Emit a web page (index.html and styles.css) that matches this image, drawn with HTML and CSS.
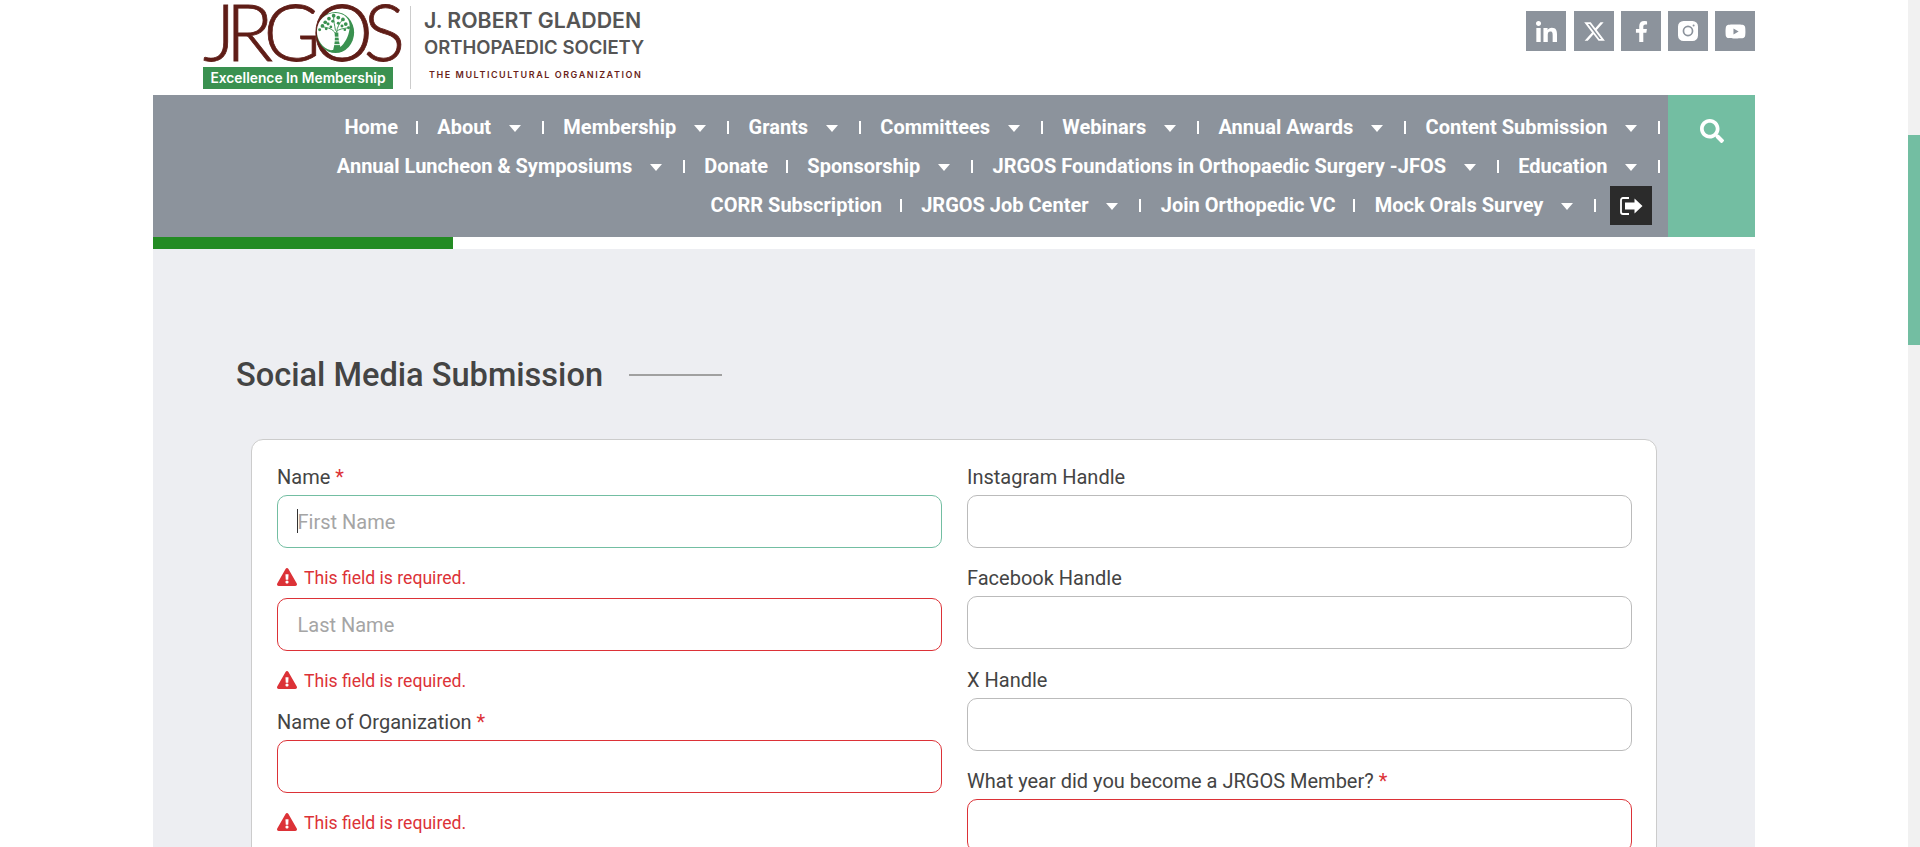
FILE: index.html
```html
<!DOCTYPE html>
<html lang="en">
<head>
<meta charset="utf-8">
<title>Social Media Submission</title>
<link rel="stylesheet" href="styles.css">
</head>
<body>
<div class="page">
  <header class="top">
    <div class="brand">
      <div class="mark">
        <div class="mark-word">
          <span class="mark-text">JRGOS</span>
          <svg class="mark-tree" viewBox="0 0 44 48" aria-hidden="true">
            <ellipse cx="22" cy="24" rx="20" ry="22" fill="#3a9150"/>
            <path d="M2 22C3 10 11 3 22 3 30 3 34 7 36 11 39 18 36 28 32 34 28 41 22 43 17 43 8 41 2 32 2 22Z" fill="#fff"/>
            <path d="M19 45C21 37 22 31 21 24L25 24C25 31 26 37 29 44Z" fill="#3a9150"/>
            <path d="M20 29H26M20 33H26M20 37H27" stroke="#fff" stroke-width="1"/>
            <path d="M22 25C19 20 14 19 9 18M23 24C24 18 26 14 30 10M23 23C26 20 30 20 35 19M22 22C21 16 20 12 20 7" stroke="#3a9150" stroke-width="1" fill="none"/>
            <g fill="#3a9150">
              <circle cx="8" cy="17" r="2"/><circle cx="5" cy="21" r="1.6"/><circle cx="11" cy="13" r="2"/><circle cx="15" cy="9" r="2"/>
              <circle cx="20" cy="6" r="2"/><circle cx="25" cy="8" r="2"/><circle cx="30" cy="10" r="2"/><circle cx="33" cy="15" r="2"/>
              <circle cx="36" cy="19" r="1.6"/><circle cx="14" cy="15" r="1.6"/><circle cx="19" cy="12" r="1.6"/><circle cx="25" cy="14" r="1.6"/>
              <circle cx="29" cy="17" r="1.6"/><circle cx="12" cy="20" r="1.5"/><circle cx="17" cy="18" r="1.5"/><circle cx="32" cy="21" r="1.4"/>
            </g>
          </svg>
        </div>
        <div class="mark-badge">Excellence In Membership</div>
      </div>
      <div class="brand-text">
        <div class="brand-l1">J. ROBERT GLADDEN</div>
        <div class="brand-l2">ORTHOPAEDIC SOCIETY</div>
        <div class="brand-l3">THE MULTICULTURAL ORGANIZATION</div>
      </div>
    </div>
    <div class="social">
      <a class="soc" href="#"><svg class="ic-li" viewBox="0 0 448 448"><path d="M100.28 448H7.4V148.9h92.88zM53.79 108.1C24.09 108.1 0 83.5 0 53.8a53.79 53.79 0 0 1 107.58 0c0 29.7-24.1 54.3-53.79 54.3zM447.9 448h-92.68V302.4c0-34.7-.7-79.2-48.29-79.2-48.29 0-55.69 37.7-55.69 76.7V448h-92.78V148.9h89.08v40.8h1.3c12.4-23.5 42.69-48.3 87.88-48.3 94 0 111.28 61.9 111.28 142.3V448z"/></svg></a>
      <a class="soc" href="#"><svg class="ic-x" viewBox="0 0 24 24"><path d="M18.244 2.25h3.308l-7.227 8.26 8.502 11.24H16.17l-5.214-6.817L4.99 21.75H1.68l7.73-8.835L1.254 2.25H8.08l4.713 6.231zm-1.161 17.52h1.833L7.084 4.126H5.117z"/></svg></a>
      <a class="soc" href="#"><svg class="ic-fb" viewBox="0 0 320 512"><path d="M279.14 288l14.22-92.66h-88.91v-60.13c0-25.35 12.42-50.06 52.24-50.06h40.42V6.26S260.43 0 225.36 0c-73.22 0-121.08 44.38-121.08 124.72v70.62H22.89V288h81.39v224h100.17V288z"/></svg></a>
      <a class="soc" href="#"><svg class="ic-ig" viewBox="0 0 20 20"><path fill-rule="evenodd" d="M5.5 0h9A5.5 5.5 0 0 1 20 5.5v9a5.500 5.500 0 0 1-5.500 5.500h-9A5.500 5.500 0 0 1 0 14.500v-9A5.500 5.500 0 0 1 5.500 0zM10 4.600a5.400 5.400 0 1 0 0 10.800 5.400 5.400 0 0 0 0-10.800zM10 6.300a3.700 3.700 0 1 1 0 7.400 3.700 3.700 0 0 1 0-7.400z"/><circle cx="15.600" cy="4.400" r="1" fill="#8c939c"/></svg></a>
      <a class="soc" href="#"><svg class="ic-yt" viewBox="0 0 576 512"><path d="M549.655 124.083c-6.281-23.65-24.787-42.276-48.284-48.597C458.781 64 288 64 288 64S117.22 64 74.629 75.486c-23.497 6.322-42.003 24.947-48.284 48.597-11.412 42.867-11.412 132.305-11.412 132.305s0 89.438 11.412 132.305c6.281 23.65 24.787 41.5 48.284 47.821C117.22 448 288 448 288 448s170.78 0 213.371-11.486c23.497-6.321 42.003-24.171 48.284-47.821 11.412-42.867 11.412-132.305 11.412-132.305s0-89.438-11.412-132.305zm-317.51 213.508V175.185l142.739 81.205-142.739 81.201z"/></svg></a>
    </div>
  </header>

  <div class="navbar">
    <nav class="menu">
      <a class="item" href="#">Home</a>
      <a class="item drop" href="#">About</a>
      <a class="item drop" href="#">Membership</a>
      <a class="item drop" href="#">Grants</a>
      <a class="item drop" href="#">Committees</a>
      <a class="item drop" href="#">Webinars</a>
      <a class="item drop" href="#">Annual Awards</a>
      <a class="item drop" href="#">Content Submission</a>
      <a class="item drop" href="#">Annual Luncheon &amp; Symposiums</a>
      <a class="item" href="#">Donate</a>
      <a class="item drop" href="#">Sponsorship</a>
      <a class="item drop" href="#">JRGOS Foundations in Orthopaedic Surgery -JFOS</a>
      <a class="item drop" href="#">Education</a>
      <a class="item" href="#">CORR Subscription</a>
      <a class="item drop" href="#">JRGOS Job Center</a>
      <a class="item" href="#">Join Orthopedic VC</a>
      <a class="item drop" href="#">Mock Orals Survey</a>
      <a class="logout" href="#" aria-label="Log out"><svg viewBox="0 0 23 18"><path d="M9 1H3C1.800 1 1 1.800 1 3v12c0 1.200.8 2 2 2h6" fill="none" stroke="#fff" stroke-width="1.800"/><path d="M5 5.500h9.500V1.500L22.500 9l-8 7.500v-4H5z" fill="#fff"/></svg></a>
    </nav>
    <a class="search" href="#" aria-label="Search"><svg viewBox="0 0 512 512"><path d="M505 442.7L405.3 343c-4.500-4.500-10.600-7-17-7H372c27.600-35.300 44-79.700 44-128C416 93.100 322.900 0 208 0S0 93.100 0 208s93.100 208 208 208c48.300 0 92.700-16.400 128-44v16.300c0 6.400 2.500 12.500 7 17l99.700 99.700c9.400 9.400 24.600 9.400 33.900 0l28.300-28.300c9.400-9.400 9.400-24.600.1-34zM208 336c-70.700 0-128-57.200-128-128 0-70.700 57.200-128 128-128 70.700 0 128 57.200 128 128 0 70.700-57.200 128-128 128z"/></svg></a>
  </div>

  <div class="progress"><div class="progress-fill"></div></div>

  <main class="content">
    <div class="heading">
      <h1>Social Media Submission</h1>
      <span class="heading-line"></span>
    </div>
    <form class="card">
      <div class="col">
        <label class="lbl">Name <em>*</em></label>
        <div class="field-wrap">
          <input class="field focus" placeholder="First Name">
          <span class="caret"></span>
        </div>
        <p class="err"><svg viewBox="0 0 576 512"><path d="M569.517 440.013C587.975 472.007 564.806 512 527.94 512H48.054c-36.937 0-59.999-40.055-41.577-71.987L246.423 23.985c18.467-32.009 64.72-31.951 83.154 0l239.94 416.028zM288 354c-25.405 0-46 20.595-46 46s20.595 46 46 46 46-20.595 46-46-20.595-46-46-46zm-43.673-165.346l7.418 136c.347 6.364 5.609 11.346 11.982 11.346h48.546c6.373 0 11.635-4.982 11.982-11.346l7.418-136c.375-6.874-5.098-12.654-11.982-12.654h-63.383c-6.884 0-12.356 5.78-11.981 12.654z"/></svg>This field is required.</p>
        <input class="field bad" placeholder="Last Name">
        <p class="err"><svg viewBox="0 0 576 512"><path d="M569.517 440.013C587.975 472.007 564.806 512 527.94 512H48.054c-36.937 0-59.999-40.055-41.577-71.987L246.423 23.985c18.467-32.009 64.72-31.951 83.154 0l239.94 416.028zM288 354c-25.405 0-46 20.595-46 46s20.595 46 46 46 46-20.595 46-46-20.595-46-46-46zm-43.673-165.346l7.418 136c.347 6.364 5.609 11.346 11.982 11.346h48.546c6.373 0 11.635-4.982 11.982-11.346l7.418-136c.375-6.874-5.098-12.654-11.982-12.654h-63.383c-6.884 0-12.356 5.78-11.981 12.654z"/></svg>This field is required.</p>
        <label class="lbl org">Name of Organization <em>*</em></label>
        <input class="field bad">
        <p class="err"><svg viewBox="0 0 576 512"><path d="M569.517 440.013C587.975 472.007 564.806 512 527.94 512H48.054c-36.937 0-59.999-40.055-41.577-71.987L246.423 23.985c18.467-32.009 64.72-31.951 83.154 0l239.94 416.028zM288 354c-25.405 0-46 20.595-46 46s20.595 46 46 46 46-20.595 46-46-20.595-46-46-46zm-43.673-165.346l7.418 136c.347 6.364 5.609 11.346 11.982 11.346h48.546c6.373 0 11.635-4.982 11.982-11.346l7.418-136c.375-6.874-5.098-12.654-11.982-12.654h-63.383c-6.884 0-12.356 5.78-11.981 12.654z"/></svg>This field is required.</p>
      </div>
      <div class="col">
        <label class="lbl">Instagram Handle</label>
        <input class="field">
        <label class="lbl next">Facebook Handle</label>
        <input class="field">
        <label class="lbl next">X Handle</label>
        <input class="field">
        <label class="lbl next">What year did you become a JRGOS Member? <em>*</em></label>
        <input class="field bad">
      </div>
    </form>
  </main>
</div>
<div class="scrollbar"><div class="thumb"></div></div>
</body>
</html>
```

FILE: styles.css
```css
* { box-sizing: border-box; }
html, body { margin: 0; height: 100%; overflow: hidden; background: #fff; }
body { font-family: Roboto, "Liberation Sans", sans-serif; color: #3d3d3d; }
a { text-decoration: none; color: inherit; }

.page { width: 1602px; margin-left: 153px; height: 847px; display: flex; flex-direction: column; }

.top { height: 95px; display: flex; justify-content: space-between; align-items: flex-start; flex: none; }
.brand { display: flex; margin-left: 50px; }
.mark { width: 207px; padding-right: 17px; }
.mark-word { position: relative; height: 67px; width: 190px; }
.mark-text { display: block; font-family: Lato, sans-serif; font-weight: 300; font-size: 78px; line-height: 63px; letter-spacing: -9.500px; -webkit-text-stroke: 0.8px #5f1d17; color: #5f1d17; white-space: nowrap; }
.mark-tree { position: absolute; left: 112px; top: 10px; width: 41px; height: 45px; }
.mark-badge { width: 190px; height: 22px; background: #3a9150; color: #fff; font-family: Inter, sans-serif; font-weight: 600; font-size: 13.800px; line-height: 22px; text-align: center; white-space: nowrap; }
.brand-text { border-left: 1px solid #ccc; height: 83px; margin-top: 6px; padding-left: 13px; color: #555; font-family: Inter, sans-serif; font-weight: 600; white-space: nowrap; }
.brand-l1 { font-size: 21.300px; line-height: 24px; margin-top: 2px; }
.brand-l2 { font-size: 18.500px; line-height: 24px; margin-top: 3px; }
.brand-l3 { font-size: 9px; line-height: 12px; letter-spacing: 1.550px; margin: 10px 0 0 5px; color: #6a1f1a; }

.social { display: flex; gap: 7px; padding-top: 11px; }
.soc { width: 40px; height: 40px; background: #8c939c; display: flex; align-items: center; justify-content: center; }
.soc svg { fill: #fff; display: block; }
.soc:first-child { margin-right: 1px; }
.ic-li { width: 21px; height: 21px; }
.ic-x { width: 23px; height: 23px; }
.ic-fb { width: 13px; height: 21px; }
.ic-ig { width: 20px; height: 20px; }
.ic-yt { width: 21px; height: 19px; }

.navbar { height: 142px; flex: none; display: flex; background: #8c939c; }
.menu { flex: 1; display: flex; flex-wrap: wrap; justify-content: flex-end; align-content: flex-start; padding: 13px 8px 0 0; }
.item { position: relative; height: 39.200px; line-height: 39px; padding: 0 19.600px; color: #fff; font-weight: 700; font-size: 20px; white-space: nowrap; }
.item::after { content: ""; position: absolute; right: 0; top: 13px; width: 2px; height: 13px; background: #fff; }
.drop { padding-right: 52.600px; }
.drop::before { content: ""; position: absolute; right: 23px; top: 17px; border-left: 6.500px solid transparent; border-right: 6.500px solid transparent; border-top: 7px solid #fff; }
.logout { width: 42px; height: 39px; margin: 0 8px 0 14px; background: #2b2b2b; display: flex; align-items: center; justify-content: center; }
.logout svg { width: 23px; height: 18px; }
.search { width: 87px; flex: none; background: #73bea2; display: flex; justify-content: center; padding-top: 24px; }
.search svg { width: 24px; height: 24px; fill: #fff; }

.progress { height: 12px; flex: none; background: #fff; }
.progress-fill { width: 300px; height: 100%; background: #238b23; }

.content { flex: 1; background: #edeef2; padding: 0 99px 0 83px; min-height: 0; }
.heading { display: flex; align-items: center; height: 60px; margin-top: 96px; }
.heading h1 { margin: 0; font-size: 32.600px; font-weight: 500; color: #444; line-height: 60px; }
.heading-line { width: 93px; height: 2px; background: #a0a0a0; margin-left: 26px; }

.card { margin: 34px -1px 0 15px; background: #fff; border: 1px solid #ccc; border-radius: 12px; padding: 25px 24.500px 0 25px; display: grid; grid-template-columns: 1fr 1fr; column-gap: 25.500px; height: 600px; }
.col { min-width: 0; }
.lbl { display: block; font-size: 20px; line-height: 24px; height: 24px; margin-bottom: 6px; color: #444; white-space: nowrap; }
.lbl em { font-style: normal; color: #dc3237; }
.lbl.next { margin-top: 18.300px; }
.lbl.org { margin-top: 9px; }
.field-wrap { position: relative; }
.field { display: block; width: 100%; height: 53px; border: 1px solid #bbb; border-radius: 10px; padding: 0 19.500px; font: 400 20px Roboto, sans-serif; background: #fff; outline: none; }
.field::placeholder { color: #a5a5a5; opacity: 1; }
.field.focus { border-color: #73bea2; }
.field.bad { border-color: #dc3237; }
.caret { position: absolute; left: 20px; top: 14px; width: 1px; height: 24px; background: #333; }
.err { margin: 18px 0 0; height: 32px; line-height: 24px; font-size: 17.600px; color: #dc3237; display: flex; align-items: flex-start; white-space: nowrap; }
.err svg { width: 20px; height: 18px; fill: #dc3237; margin: 2px 7px 0 0; flex: none; }

.scrollbar { position: fixed; top: 0; right: 0; width: 12px; height: 847px; background: #f1f1f1; }
.thumb { width: 12px; height: 210px; margin-top: 135px; background: #73bea2; }
```
